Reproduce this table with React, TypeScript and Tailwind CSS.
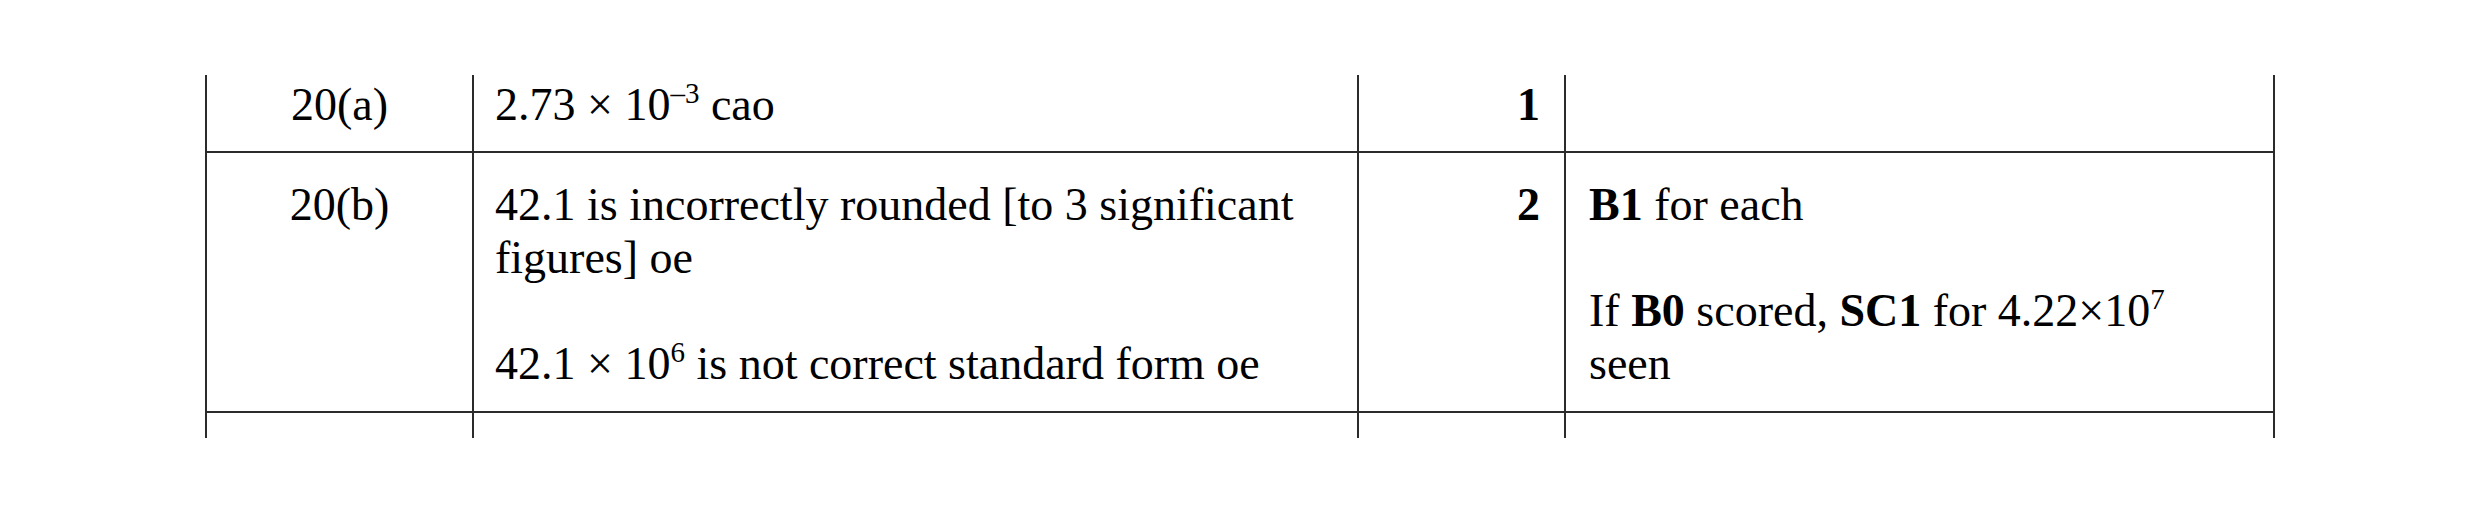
const cell = 'border-l-2 border-[#2b2b2b]'

function Sup({ children }: { children: React.ReactNode }) {
  return <sup className="text-[29px] -top-[0.6em]">{children}</sup>
}

export default function App() {
  return (
    <div className="min-h-[514px] w-[2481px] bg-white pt-[75px] pl-[205px] font-['Liberation_Serif','Times_New_Roman',serif] text-[46px] leading-[53px] text-black">
      <div className="grid grid-cols-[267px_885px_207px_711px]">
        {/* row 20(a), continued from the previous page so no top rule */}
        <div className={`${cell} pt-[3px] pb-[20px] text-center`}>20(a)</div>
        <div className={`${cell} pt-[3px] pb-[20px] pl-[21px]`}>
          2.73 × 10<Sup>–3</Sup> cao
        </div>
        <div className={`${cell} pt-[3px] pb-[20px] pr-[24px] text-right font-bold`}>1</div>
        <div className={`${cell} border-r-2 pt-[3px] pb-[20px]`} />

        {/* row 20(b) */}
        <div className={`${cell} border-t-2 pt-[25px] pb-[21px] text-center`}>20(b)</div>
        <div className={`${cell} border-t-2 pt-[25px] pb-[21px] pl-[21px]`}>
          <p>
            42.1 is incorrectly rounded [to 3 significant
            <br />
            figures] oe
          </p>
          <p className="mt-[53px]">
            42.1 × 10<Sup>6</Sup> is not correct standard form oe
          </p>
        </div>
        <div className={`${cell} border-t-2 pt-[25px] pb-[21px] pr-[24px] text-right font-bold`}>2</div>
        <div className={`${cell} border-t-2 border-r-2 pt-[25px] pb-[21px] pl-[23px]`}>
          <p>
            <b>B1</b> for each
          </p>
          <p className="mt-[53px]">
            If <b>B0</b> scored, <b>SC1</b> for 4.22×10<Sup>7</Sup>
            <br />
            seen
          </p>
        </div>

        {/* start of the next row, cut by the page edge */}
        <div className={`${cell} border-t-2 h-[27px]`} />
        <div className={`${cell} border-t-2 h-[27px]`} />
        <div className={`${cell} border-t-2 h-[27px]`} />
        <div className={`${cell} border-t-2 border-r-2 h-[27px]`} />
      </div>
    </div>
  )
}
